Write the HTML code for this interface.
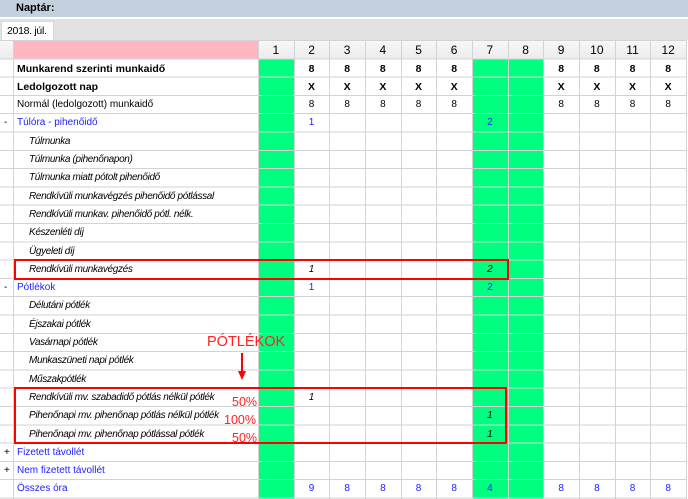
<!DOCTYPE html>
<html><head><meta charset="utf-8"><style>
*{margin:0;padding:0;box-sizing:border-box}
body{width:688px;height:499px;overflow:hidden;background:#fff;font-family:"Liberation Sans",sans-serif;font-size:10px;color:#000;position:relative}
.abs{position:absolute}
.top{left:0;top:0;width:688px;height:17px;background:#c4d0dd}
.top b{position:absolute;left:16px;top:2px;font-size:11px}
.strip{left:0;top:19px;width:688px;height:21px;background:#e2e2e2}
.tab{left:1px;top:21px;width:53px;height:19px;background:#fff;border:1px solid #d8d8d8;border-bottom:none;font-size:10.5px;padding:3px 0 0 5px;letter-spacing:-0.3px}
.hdr{left:0;top:40px;width:686px;height:19px;background:linear-gradient(#f8f8f8,#ececec)}
.pink{left:13px;top:40px;width:245px;height:19px;background:#ffb6c1}
.g{background:#00ff80;top:59px;height:440px;width:36px}
.grid{left:0;top:41px;width:687px;height:458px;
background-image:repeating-linear-gradient(to bottom,transparent 0,transparent 17.3px,#d3d3d3 17.3px,#d3d3d3 18.3px)}
.hl{left:0;top:40px;width:687px;height:1px;background:#d3d3d3}
.vl{top:40px;width:1px;height:459px;background:#d3d3d3}
.r{position:absolute;left:0;width:686px;height:18.3px;line-height:18px}
.r .l{position:absolute;left:17px;top:0;white-space:nowrap}
.r .li{position:absolute;left:29px;top:0;font-style:italic;white-space:nowrap;font-size:10px;letter-spacing:-0.35px}
.r .m{position:absolute;left:4px;top:0}
.c{position:absolute;width:35.7px;text-align:center;top:0}
.b{font-weight:bold;font-size:10.5px}
.blue{color:#2020ff}
.hn{position:absolute;top:40px;height:19px;width:35.7px;text-align:center;line-height:20px;font-size:12px}
.box{position:absolute;border:2px solid #f00}
.red{color:#ff2020;position:absolute;font-size:12.5px;line-height:14px}
</style></head><body>
<div class="abs top"><b>Naptár:</b></div>
<div class="abs strip"></div>
<div class="abs tab">2018. júl.</div>
<div class="abs hdr"></div>
<div class="abs pink"></div>
<div class="abs g" style="left:258px"></div>
<div class="abs g" style="left:472px;width:71.3px"></div>
<div class="abs grid"></div>
<div class="abs hl"></div>
<div class="abs vl" style="left:13px"></div>
<div class="abs vl" style="left:258px"></div>
<div class="abs vl" style="left:293.7px"></div>
<div class="abs vl" style="left:329.3px"></div>
<div class="abs vl" style="left:365px"></div>
<div class="abs vl" style="left:400.7px"></div>
<div class="abs vl" style="left:436.3px"></div>
<div class="abs vl" style="left:472px"></div>
<div class="abs vl" style="left:507.7px"></div>
<div class="abs vl" style="left:543.3px"></div>
<div class="abs vl" style="left:579px"></div>
<div class="abs vl" style="left:614.7px"></div>
<div class="abs vl" style="left:650.3px"></div>
<div class="abs vl" style="left:686px"></div>

<div class="hn" style="left:258px">1</div><div class="hn" style="left:293.7px">2</div><div class="hn" style="left:329.3px">3</div><div class="hn" style="left:365px">4</div><div class="hn" style="left:400.7px">5</div><div class="hn" style="left:436.3px">6</div><div class="hn" style="left:472px">7</div><div class="hn" style="left:507.7px">8</div><div class="hn" style="left:543.3px">9</div><div class="hn" style="left:579px">10</div><div class="hn" style="left:614.7px">11</div><div class="hn" style="left:650.3px">12</div>

<div class="r b" style="top:59.5px"><span class="l">Munkarend szerinti munkaidő</span>
<span class="c" style="left:293.7px">8</span><span class="c" style="left:329.3px">8</span><span class="c" style="left:365px">8</span><span class="c" style="left:400.7px">8</span><span class="c" style="left:436.3px">8</span><span class="c" style="left:543.3px">8</span><span class="c" style="left:579px">8</span><span class="c" style="left:614.7px">8</span><span class="c" style="left:650.3px">8</span></div>
<div class="r b" style="top:77.8px"><span class="l">Ledolgozott nap</span>
<span class="c" style="left:293.7px">X</span><span class="c" style="left:329.3px">X</span><span class="c" style="left:365px">X</span><span class="c" style="left:400.7px">X</span><span class="c" style="left:436.3px">X</span><span class="c" style="left:543.3px">X</span><span class="c" style="left:579px">X</span><span class="c" style="left:614.7px">X</span><span class="c" style="left:650.3px">X</span></div>
<div class="r" style="top:96.1px"><span class="l">Normál (ledolgozott) munkaidő</span>
<span class="c" style="left:293.7px">8</span><span class="c" style="left:329.3px">8</span><span class="c" style="left:365px">8</span><span class="c" style="left:400.7px">8</span><span class="c" style="left:436.3px">8</span><span class="c" style="left:543.3px">8</span><span class="c" style="left:579px">8</span><span class="c" style="left:614.7px">8</span><span class="c" style="left:650.3px">8</span></div>
<div class="r blue" style="top:114.4px"><span class="m" style="color:#000">-</span><span class="l">Túlóra - pihenőidő</span><span class="c" style="left:293.7px">1</span><span class="c" style="left:472px">2</span></div>
<div class="r" style="top:132.7px"><span class="li">Túlmunka</span></div>
<div class="r" style="top:151px"><span class="li">Túlmunka (pihenőnapon)</span></div>
<div class="r" style="top:169.3px"><span class="li">Túlmunka miatt pótolt pihenőidő</span></div>
<div class="r" style="top:187.6px"><span class="li">Rendkívüli munkavégzés pihenőidő pótlással</span></div>
<div class="r" style="top:205.9px"><span class="li">Rendkívüli munkav. pihenőidő pótl. nélk.</span></div>
<div class="r" style="top:224.2px"><span class="li">Készenléti díj</span></div>
<div class="r" style="top:242.5px"><span class="li">Ügyeleti díj</span></div>
<div class="r" style="top:260.8px"><span class="li">Rendkívüli munkavégzés</span><span class="c" style="left:293.7px;font-style:italic">1</span><span class="c" style="left:472px;font-style:italic">2</span></div>
<div class="r blue" style="top:279.1px"><span class="m" style="color:#000">-</span><span class="l">Pótlékok</span><span class="c" style="left:293.7px">1</span><span class="c" style="left:472px">2</span></div>
<div class="r" style="top:297.4px"><span class="li">Délutáni pótlék</span></div>
<div class="r" style="top:315.7px"><span class="li">Éjszakai pótlék</span></div>
<div class="r" style="top:334px"><span class="li">Vasárnapi pótlék</span></div>
<div class="r" style="top:352.3px"><span class="li">Munkaszüneti napi pótlék</span></div>
<div class="r" style="top:370.6px"><span class="li">Műszakpótlék</span></div>
<div class="r" style="top:388.9px"><span class="li">Rendkívüli mv. szabadidő pótlás nélkül pótlék</span><span class="c" style="left:293.7px;font-style:italic">1</span></div>
<div class="r" style="top:407.2px"><span class="li">Pihenőnapi mv. pihenőnap pótlás nélkül pótlék</span><span class="c" style="left:472px;font-style:italic">1</span></div>
<div class="r" style="top:425.5px"><span class="li">Pihenőnapi mv. pihenőnap pótlással pótlék</span><span class="c" style="left:472px;font-style:italic">1</span></div>
<div class="r blue" style="top:443.8px"><span class="m" style="color:#000">+</span><span class="l">Fizetett távollét</span></div>
<div class="r blue" style="top:462.1px"><span class="m" style="color:#000">+</span><span class="l">Nem fizetett távollét</span></div>
<div class="r blue" style="top:480.4px"><span class="l">Összes óra</span>
<span class="c" style="left:293.7px">9</span><span class="c" style="left:329.3px">8</span><span class="c" style="left:365px">8</span><span class="c" style="left:400.7px">8</span><span class="c" style="left:436.3px">8</span><span class="c" style="left:472px">4</span><span class="c" style="left:543.3px">8</span><span class="c" style="left:579px">8</span><span class="c" style="left:614.7px">8</span><span class="c" style="left:650.3px">8</span></div>

<div class="box" style="left:14px;top:259px;width:495px;height:21px"></div>
<div class="box" style="left:14px;top:387px;width:493px;height:57px"></div>
<div class="red" style="left:207px;top:334px;font-size:14.5px;line-height:16px">PÓTLÉKOK</div>
<svg class="abs" style="left:237px;top:353px" width="10" height="28"><line x1="5" y1="0" x2="5" y2="20" stroke="#f00" stroke-width="2"/><path d="M1 18 L9 18 L5 27 Z" fill="#f00"/></svg>
<div class="red" style="left:232px;top:395px">50%</div>
<div class="red" style="left:224px;top:413px">100%</div>
<div class="red" style="left:232px;top:431px">50%</div>
</body></html>
